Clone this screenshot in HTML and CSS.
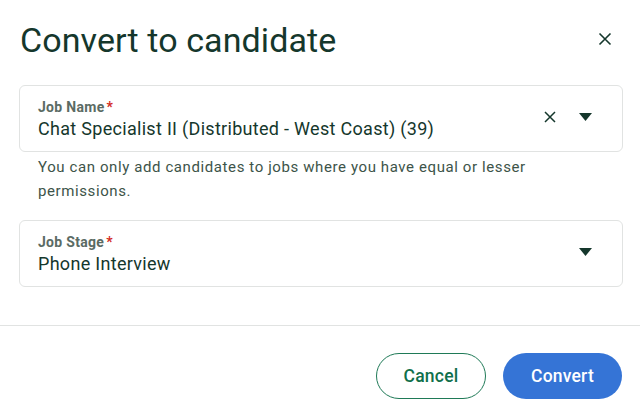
FILE: index.html
```html
<!DOCTYPE html>
<html>
<head>
<meta charset="utf-8">
<link rel="stylesheet" href="styles.css">
</head>
<body>
<div class="modal">
  <div class="header">
    <h1 class="title">Convert to candidate</h1>
    <button class="close" aria-label="Close">
      <svg width="14" height="14" viewBox="0 0 14 14"><path d="M1.5 1.5L12.5 12.5M12.5 1.5L1.5 12.5" stroke="#15372c" stroke-width="1.6" fill="none"/></svg>
    </button>
  </div>
  <div class="body">
    <div class="field">
      <div class="field-main">
        <div class="label">Job Name<span class="req">*</span></div>
        <div class="value">Chat Specialist II (Distributed - West Coast) (39)</div>
      </div>
      <div class="icons">
        <svg class="clear" width="12" height="12" viewBox="0 0 12 12"><path d="M1 1L11 11M11 1L1 11" stroke="#15372c" stroke-width="1.5" fill="none"/></svg>
        <svg class="caret" width="13" height="8" viewBox="0 0 13 8"><path d="M0 0H13L6.5 8Z" fill="#15372c"/></svg>
      </div>
    </div>
    <p class="help">You can only add candidates to jobs where you have equal or lesser permissions.</p>
    <div class="field stage">
      <div class="field-main">
        <div class="label">Job Stage<span class="req">*</span></div>
        <div class="value">Phone Interview</div>
      </div>
      <div class="icons">
        <svg class="caret" width="13" height="8" viewBox="0 0 13 8"><path d="M0 0H13L6.5 8Z" fill="#15372c"/></svg>
      </div>
    </div>
  </div>
  <div class="footer">
    <button class="btn cancel">Cancel</button>
    <button class="btn convert">Convert</button>
  </div>
</div>
</body>
</html>
```
FILE: styles.css
```css
* { box-sizing: border-box; }
html, body { margin: 0; padding: 0; background: #fff; }
body { font-family: Roboto, "Liberation Sans", sans-serif; color: #15372c; }
.modal { width: 640px; height: 411px; display: flex; flex-direction: column; }
.header { display: flex; align-items: center; justify-content: space-between; padding: 19px 28px 0 20px; height: 60px; }
.title { margin: 0; font-size: 34px; font-weight: 400; color: #15372c; letter-spacing: 0.1px; }
.close { border: 0; background: none; padding: 0; display: flex; margin-top: -2px; }
.body { padding: 25px 17px 0 19px; }
.field { border: 1px solid #e1e3e2; border-radius: 6px; height: 67px; display: flex; align-items: center; padding: 0 30px 0 18px; }
.field-main { flex: 1; padding-top: 1px; }
.label { font-size: 14px; font-weight: 700; color: #5b6b64; line-height: 16px; letter-spacing: 0.3px; }
.req { color: #d32b1e; margin-left: 2px; }
.value { font-size: 18px; line-height: 22px; margin-top: 3px; color: #15372c; letter-spacing: 0.3px; }
.icons { display: flex; align-items: center; gap: 23px; margin-top: -3px; }
.help { margin: 3px 0 0 19px; font-size: 15px; line-height: 24px; color: #3d5449; letter-spacing: 0.6px; width: 540px; }
.stage { margin-top: 17px; }
.footer { margin-top: 38px; border-top: 1px solid #e1e3e2; display: flex; justify-content: flex-end; gap: 17px; padding: 27px 18px 0 0; }
.btn { height: 46px; border-radius: 23px; font-family: Roboto, "Liberation Sans", sans-serif; font-size: 17.5px; font-weight: 500; letter-spacing: 0.2px; }
.cancel { width: 110px; background: #fff; border: 1px solid #1f7a57; color: #10704b; }
.convert { width: 119px; background: #3574d6; border: 0; color: #fff; }
```
